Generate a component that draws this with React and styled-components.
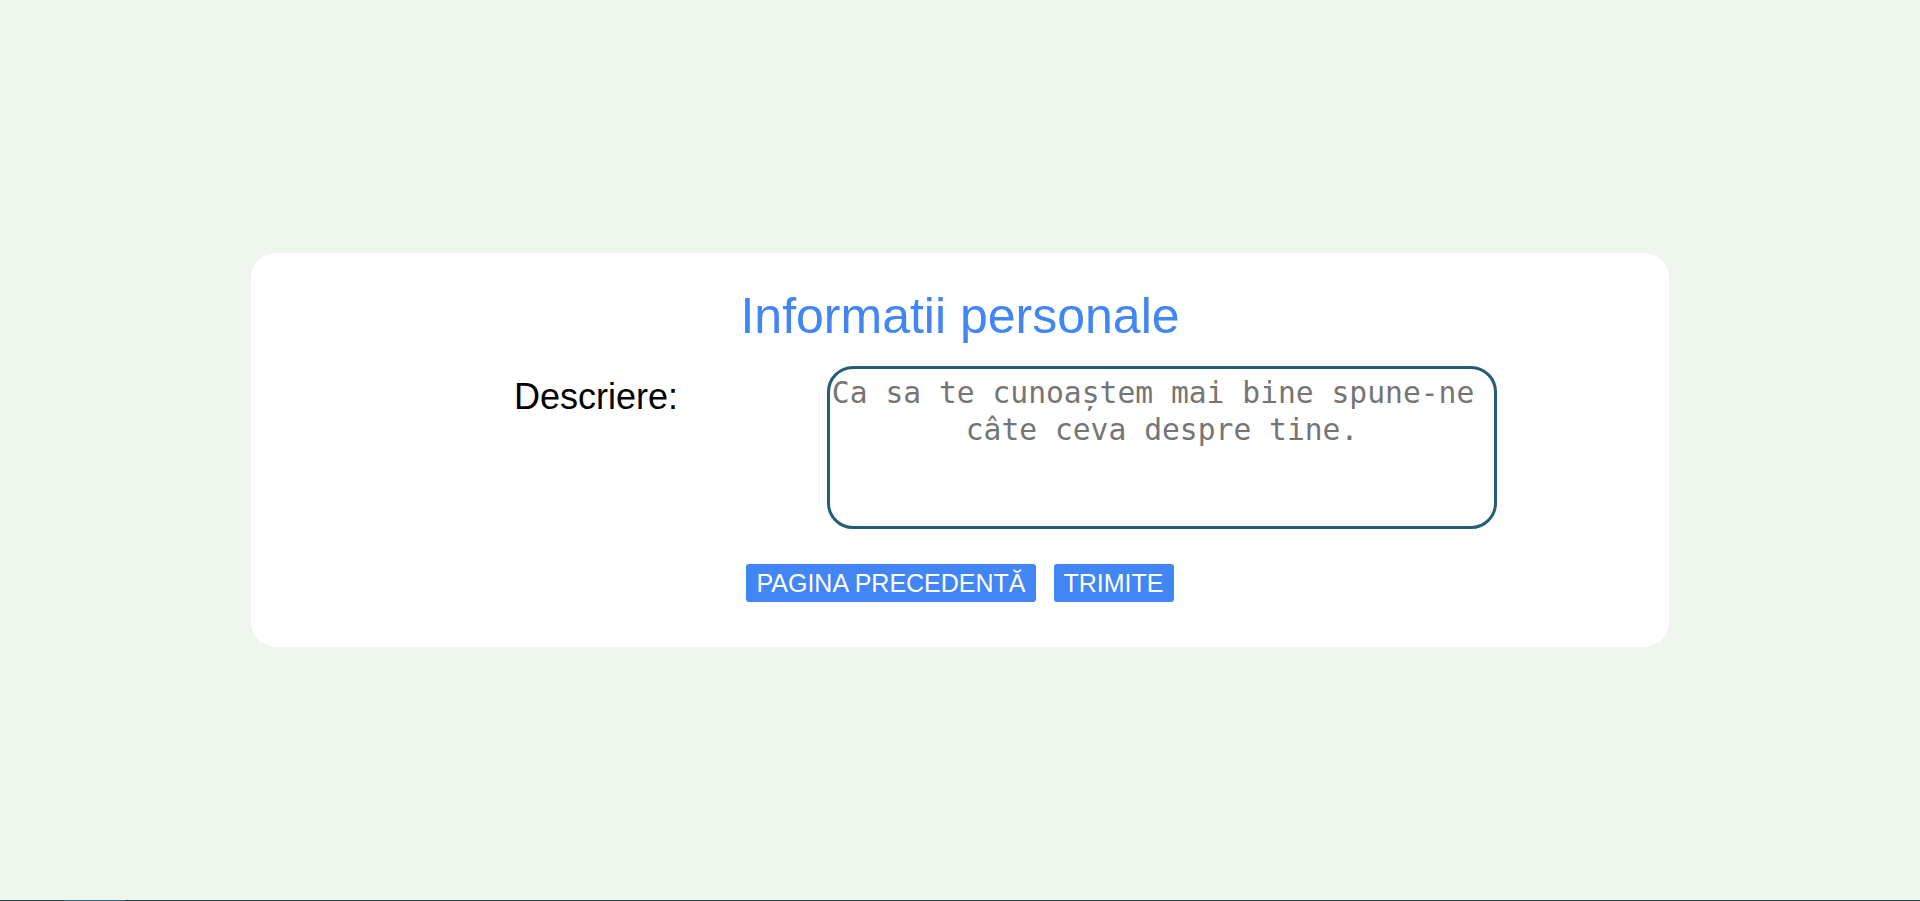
import React from "react";
import styled, { createGlobalStyle } from "styled-components";

const GlobalStyle = createGlobalStyle`
  html, body {
    margin: 0;
    padding: 0;
    background: #eff6ee;
    font-family: "Liberation Sans", Arial, sans-serif;
  }
  * { box-sizing: border-box; }
`;

const Page = styled.div`
  height: 100vh;
  display: flex;
  flex-direction: column;
  background: #eff6ee;
`;

const Main = styled.main`
  flex: 1;
  display: flex;
  align-items: center;
  justify-content: center;
`;

const BottomBar = styled.div`
  height: 1px;
  flex: none;
  background: linear-gradient(
    to right,
    #1b3f52 0,
    #1b3f52 64px,
    #2b6a8a 64px,
    #2b6a8a 125px,
    #1b3f52 125px,
    #1b3f52 100%
  );
`;

const Card = styled.section`
  width: 1418px;
  background: #ffffff;
  border-radius: 25px;
  padding: 35px 0 45px;
  display: flex;
  flex-direction: column;
`;

const Title = styled.h1`
  margin: 0;
  font-family: "Liberation Sans", Arial, sans-serif;
  font-weight: 400;
  font-size: 50px;
  line-height: 57.5px;
  color: #4285f4;
  text-align: center;
`;

const FieldRow = styled.div`
  display: flex;
  align-items: flex-start;
  margin-top: 20.5px;
  padding-left: 263px;
`;

const Label = styled.label`
  flex: none;
  width: 313px;
  margin-top: 9.7px;
  font-family: "Liberation Sans", Arial, sans-serif;
  font-size: 36px;
  line-height: 41.4px;
  color: #000000;
`;

const TextArea = styled.textarea`
  flex: none;
  width: 670px;
  height: 163px;
  margin: 0;
  padding: 4.5px 1px 1px;
  border: 3px solid #235e78;
  border-radius: 26px;
  background: #ffffff;
  resize: none;
  outline: none;
  overflow: hidden;
  font-family: "DejaVu Sans Mono", "Liberation Mono", monospace;
  font-size: 29.65px;
  line-height: 37px;
  text-align: center;
  white-space: break-spaces;
  color: #333333;

  &::placeholder {
    color: #757575;
    opacity: 1;
    white-space: break-spaces;
  }
`;

const Actions = styled.div`
  display: flex;
  justify-content: center;
  gap: 18px;
  margin-top: 35px;
`;

const Button = styled.button`
  height: 38px;
  margin: 0;
  padding: 5.4px 10px 4px;
  border: none;
  border-radius: 3px;
  background: #4285f4;
  color: #ffffff;
  font-family: "Liberation Sans", Arial, sans-serif;
  font-size: 25px;
  line-height: 28.7px;
  cursor: pointer;
  white-space: nowrap;
`;

export default function App() {
  return (
    <>
      <GlobalStyle />
      <Page>
        <Main>
          <Card>
            <Title>Informatii personale</Title>
            <FieldRow>
              <Label htmlFor="descriere">Descriere:</Label>
              <TextArea
                id="descriere"
                placeholder="Ca sa te cunoaștem mai bine spune-ne câte ceva despre tine."
              />
            </FieldRow>
            <Actions>
              <Button type="button">PAGINA PRECEDENTĂ</Button>
              <Button type="submit">TRIMITE</Button>
            </Actions>
          </Card>
        </Main>
        <BottomBar />
      </Page>
    </>
  );
}
